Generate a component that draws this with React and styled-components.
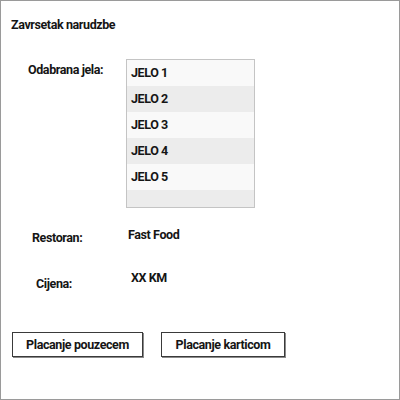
import styled, { createGlobalStyle } from "styled-components";

const Global = createGlobalStyle`
  html, body {
    margin: 0;
    padding: 0;
    background: #ffffff;
  }
  body {
    font-family: Roboto, "Noto Sans", sans-serif;
    font-size: 12.5px;
    font-weight: 700;
    letter-spacing: -0.4px;
    color: #151515;
  }
`;

const Frame = styled.div`
  width: 400px;
  height: 400px;
  box-sizing: border-box;
  border: 1px solid #9a9a9a;
  display: flex;
  flex-direction: column;
`;

const Title = styled.div`
  line-height: 16px;
  padding: 16px 0 0 10px;
`;

const Row = styled.div`
  display: grid;
  grid-template-columns: 125px 1fr;
  align-items: start;
  margin-top: ${({ $gap }) => $gap}px;
`;

const Label = styled.div`
  line-height: 16px;
  padding-left: ${({ $indent }) => $indent}px;
  padding-top: ${({ $dy }) => $dy || 0}px;
`;

const Value = styled.div`
  line-height: 16px;
  padding-left: ${({ $indent }) => $indent || 0}px;
  padding-top: ${({ $dy }) => $dy || 0}px;
`;

const List = styled.div`
  width: 129px;
  height: 149px;
  box-sizing: border-box;
  border: 1px solid #c4c4c4;
  overflow: hidden;
  display: flex;
  flex-direction: column;
`;

const Item = styled.div`
  flex: 0 0 26px;
  box-sizing: border-box;
  display: flex;
  align-items: center;
  padding: 0 0 2px 4px;
  background: ${({ $alt }) => ($alt ? "#ececec" : "#f9f9f9")};
`;

const Buttons = styled.div`
  display: flex;
  gap: 18px;
  padding-left: 11px;
  margin-top: ${({ $gap }) => $gap}px;
`;

const Button = styled.button`
  width: ${({ $w }) => $w}px;
  height: 25px;
  box-sizing: border-box;
  border: 1px solid #3a3a3a;
  box-shadow: 1px 1px 0 #8a8a8a;
  background: #ffffff;
  font: inherit;
  letter-spacing: inherit;
  color: inherit;
  padding: 0 0 1px;
`;

const meals = ["JELO 1", "JELO 2", "JELO 3", "JELO 4", "JELO 5", ""];

export default function App() {
  return (
    <>
      <Global />
      <Frame>
        <Title>Zavrsetak narudzbe</Title>
        <Row $gap={26}>
          <Label $indent={27} $dy={3}>Odabrana jela:</Label>
          <List>
            {meals.map((m, i) => (
              <Item key={i} $alt={i % 2 === 1}>{m}</Item>
            ))}
          </List>
        </Row>
        <Row $gap={19}>
          <Label $indent={31} $dy={3}>Restoran:</Label>
          <Value $indent={2}>Fast Food</Value>
        </Row>
        <Row $gap={24}>
          <Label $indent={35} $dy={6}>Cijena:</Label>
          <Value $indent={5}>XX KM</Value>
        </Row>
        <Buttons $gap={40}>
          <Button $w={131}>Placanje pouzecem</Button>
          <Button $w={124}>Placanje karticom</Button>
        </Buttons>
      </Frame>
    </>
  );
}
